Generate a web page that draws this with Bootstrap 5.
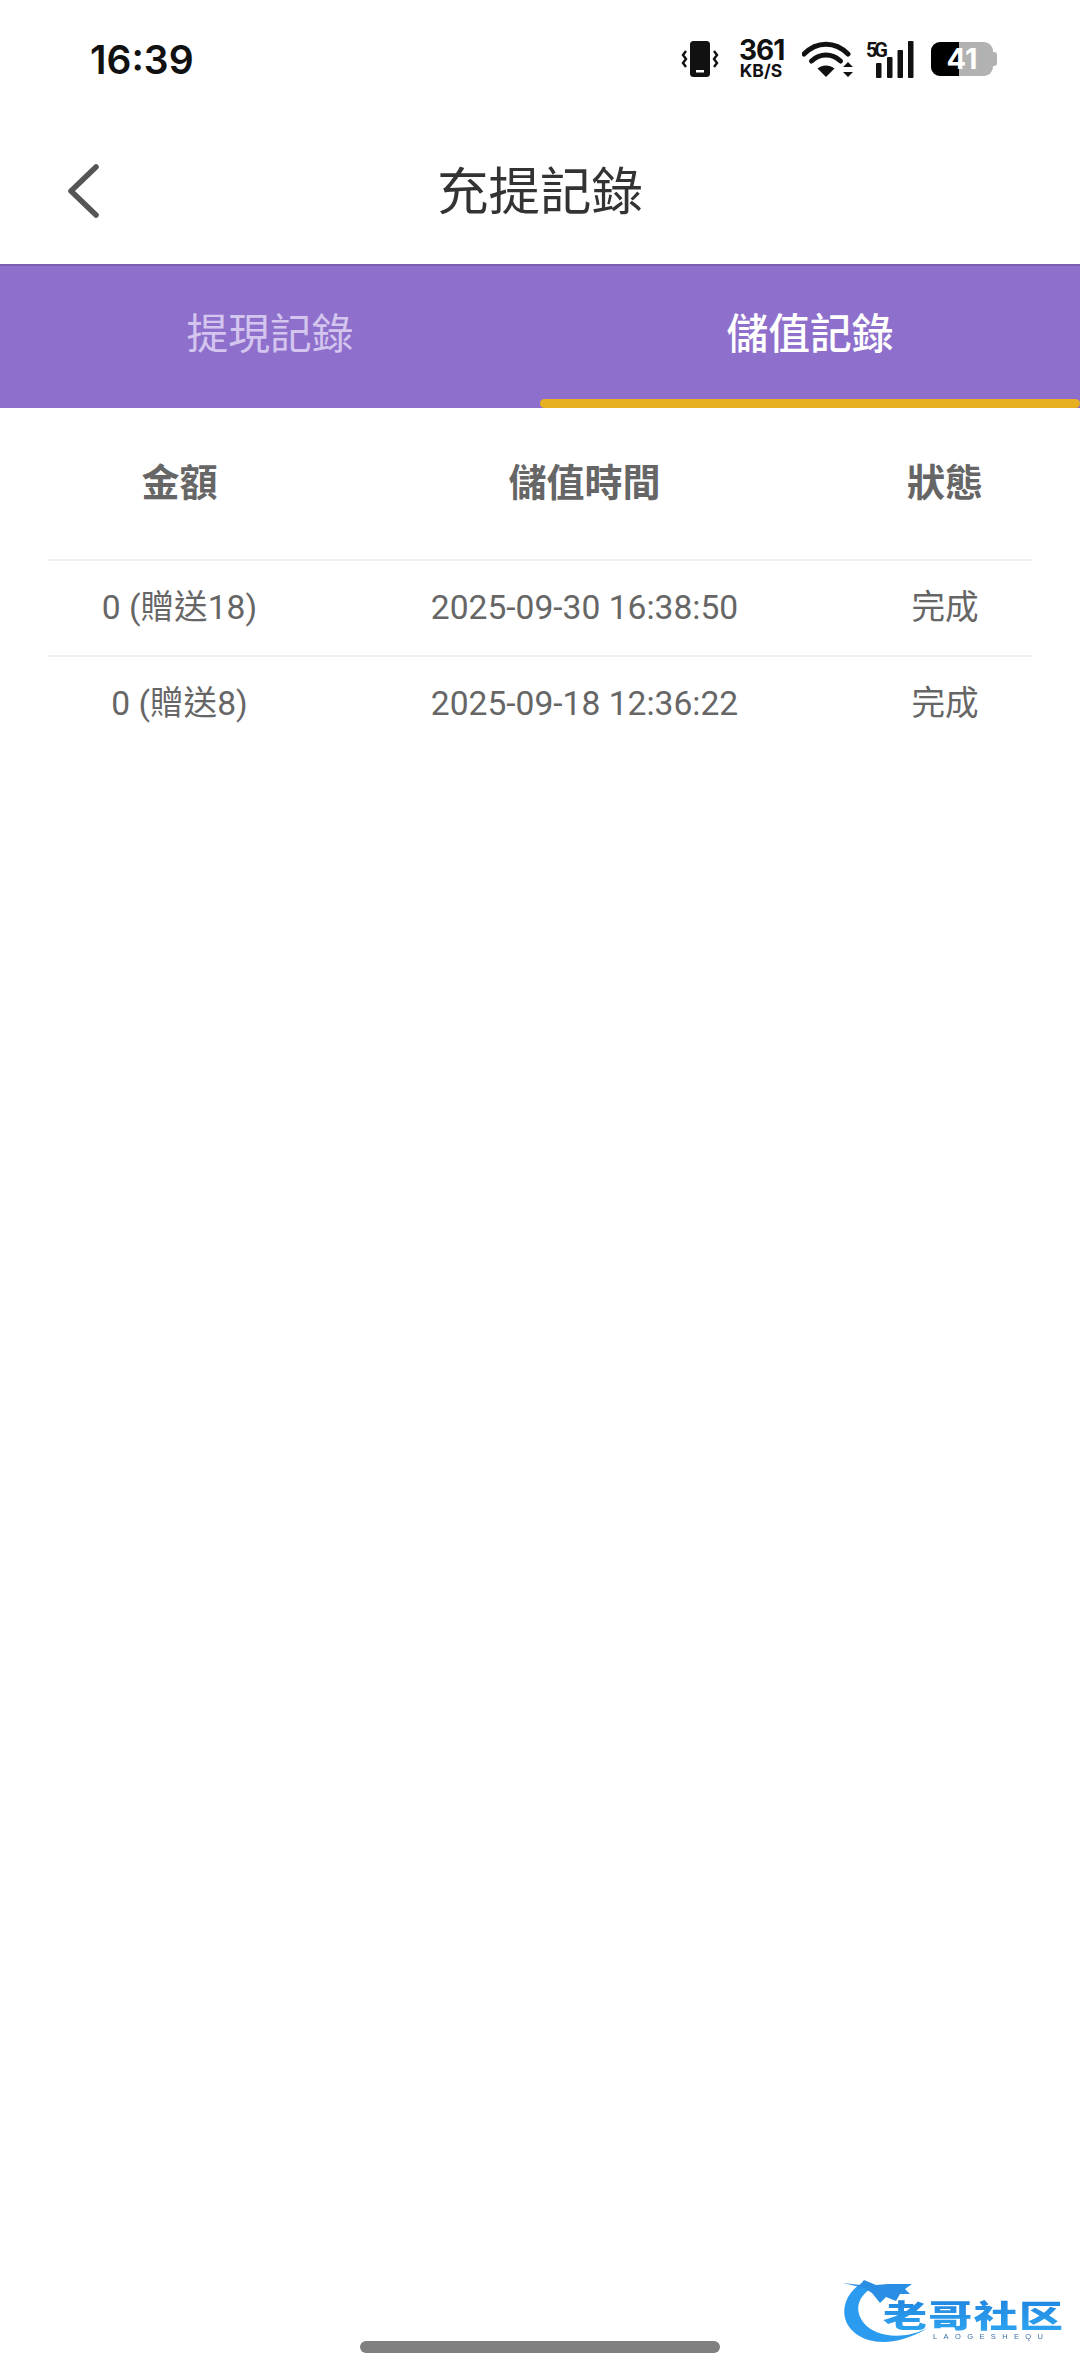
<!DOCTYPE html>
<html lang="zh-Hant">
<head>
    <meta charset="UTF-8">
    <meta name="viewport" content="width=device-width, initial-scale=1">
    <title>充提記錄</title>
    <link href="https://cdn.jsdelivr.net/npm/bootstrap@5.3.0/dist/css/bootstrap.min.css" rel="stylesheet">
    <style>
        body {
            font-family: Roboto, "Noto Sans CJK TC", sans-serif;
            background: #fff;
        }
        .phone-page {
            width: 1080px;
            height: 2374px;
            position: relative;
            overflow: hidden;
        }
        .status-strip {
            height: 110px;
            padding: 8px 83px 0 90px;
            color: #111;
        }
        .clock-text {
            font-family: Inter, sans-serif;
            font-size: 39px;
            font-weight: 600;
            line-height: 1;
        }
        .speed-box {
            width: 44px;
            margin: 0 19px 0 20px;
            font-family: Inter, sans-serif;
            font-weight: 700;
            text-align: center;
        }
        .speed-num { font-size: 28px; line-height: 23px; letter-spacing: -1px; }
        .speed-unit { font-size: 17.500px; line-height: 17px; white-space: nowrap; }
        .signal-icon { margin-left: 12px; }
        .batt-box {
            width: 62px;
            height: 34px;
            margin-left: 15px;
            border-radius: 9px;
            background: #b2b2b2;
            position: relative;
            overflow: hidden;
        }
        .batt-fill { height: 100%; background: #000; }
        .batt-num {
            position: absolute;
            top: 0;
            left: 0;
            right: 0;
            text-align: center;
            color: #fff;
            font-family: Inter, sans-serif;
            font-size: 29px;
            font-weight: 700;
            line-height: 34px;
        }
        .batt-tip { width: 4px; height: 14px; background: #b2b2b2; border-radius: 0 3px 3px 0; }
        .title-bar { height: 154px; padding-top: 8px; }
        .title-side { flex: 1 1 0; padding-left: 66px; }
        .title-text {
            font-size: 51.500px;
            font-weight: 400;
            color: #333;
            margin: 4px 0 0;
            line-height: 1;
        }
        .tab-strip {
            height: 144px;
            background: #8e70cc;
            border-top: 2px solid #7a60ae;
        }
        .tab-strip .nav-item { position: relative; }
        .tab-strip .nav-link {
            height: 142px;
            padding: 0;
            font-size: 41.800px;
            line-height: 138px;
            color: #d3c5ee;
        }
        .tab-strip .nav-link.active { color: #fff; font-weight: 500; }
        .tab-mark {
            position: absolute;
            left: 0;
            right: 0;
            bottom: 0;
            height: 9px;
            border-radius: 5px;
            background: #e6b022;
        }
        .record-wrap { padding: 0 48px; }
        .record-table { table-layout: fixed; color: #666; }
        .record-table > * > * > * {
            padding: 7px 0 0;
            text-align: center;
            vertical-align: middle;
            color: #666;
        }
        .record-table th { height: 152px; font-size: 38px; font-weight: 700; }
        .record-table td {
            height: 96px;
            font-size: 33.600px;
            border-top: 2px solid #eee;
        }
        .col-amount { width: 263px; }
        .col-time { width: 547px; }
        .col-state { width: 174px; }
        .home-pill {
            width: 360px;
            height: 12px;
            margin: 0 auto 21px;
            border-radius: 6px;
            background: #808080;
        }
        .site-logo {
            position: absolute;
            left: 820px;
            top: 2260px;
        }
        .logo-name { font-family: "Noto Sans CJK SC", sans-serif; font-size: 44px; font-weight: 900; }
        .logo-sub { font-family: "Liberation Sans", sans-serif; font-size: 7.500px; }
    </style>
</head>
<body>

<div class="phone-page d-flex flex-column">
    <div class="status-strip d-flex align-items-center justify-content-between">
        <span class="clock-text">16:39</span>
        <div class="d-flex align-items-center">
            <svg width="38" height="38" viewBox="0 0 38 38">
                <rect x="9" y="1" width="20" height="36" rx="3.500" fill="#111"/>
                <rect x="15" y="30" width="8" height="2.500" fill="#fff"/>
                <path d="M5 11l-3 4 3 4-3 4 3 4M33 11l3 4-3 4 3 4-3 4" fill="none" stroke="#111" stroke-width="2.400"/>
            </svg>
            <div class="speed-box">
                <div class="speed-num">361</div>
                <div class="speed-unit">KB/S</div>
            </div>
            <svg width="52" height="38" viewBox="0 0 52 38">
                <path d="M2 14C15 1 33 1 46 14" fill="none" stroke="#111" stroke-width="5" stroke-linecap="round"/>
                <path d="M9.500 21C18 13 30 13 38.500 21" fill="none" stroke="#111" stroke-width="5" stroke-linecap="round"/>
                <path d="M15.500 28.500C20.500 24.500 27.500 24.500 32.500 28.500L24 37Z" fill="#111"/>
                <path d="M46 22l5 5H41ZM46 37l5-5H41Z" fill="#111"/>
            </svg>
            <svg width="50" height="42" viewBox="0 -2 50 42" class="signal-icon">
                <text x="0" y="17" font-family="Roboto, sans-serif" font-size="20" font-weight="700" fill="#111" textLength="22">5G</text>
                <rect x="10" y="23" width="5.500" height="15" rx="1" fill="#111"/>
                <rect x="21" y="17" width="5.500" height="21" rx="1" fill="#111"/>
                <rect x="31.500" y="10" width="5.500" height="28" rx="1" fill="#111"/>
                <rect x="42" y="1" width="5.500" height="37" rx="1" fill="#111"/>
            </svg>
            <div class="batt-box">
                <div class="batt-fill" style="width: 45%"></div>
                <div class="batt-num">41</div>
            </div>
            <div class="batt-tip"></div>
        </div>
    </div>

    <div class="title-bar d-flex align-items-center">
        <div class="title-side">
            <svg width="34" height="54" viewBox="0 0 34 54" class="d-block">
                <path d="M30 3L5 27l25 24" fill="none" stroke="#555" stroke-width="5.500" stroke-linecap="round" stroke-linejoin="round"/>
            </svg>
        </div>
        <h1 class="title-text">充提記錄</h1>
        <div class="title-side"></div>
    </div>

    <ul class="nav nav-fill tab-strip">
        <li class="nav-item"><a class="nav-link" href="#">提現記錄</a></li>
        <li class="nav-item">
            <a class="nav-link active" href="#">儲值記錄</a>
            <span class="tab-mark"></span>
        </li>
    </ul>

    <div class="record-wrap flex-grow-1">
        <table class="table table-borderless mb-0 record-table">
            <thead>
                <tr>
                    <th class="col-amount">金額</th>
                    <th class="col-time">儲值時間</th>
                    <th class="col-state">狀態</th>
                </tr>
            </thead>
            <tbody>
                <tr>
                    <td>0 (贈送18)</td>
                    <td>2025-09-30 16:38:50</td>
                    <td>完成</td>
                </tr>
                <tr>
                    <td>0 (贈送8)</td>
                    <td>2025-09-18 12:36:22</td>
                    <td>完成</td>
                </tr>
            </tbody>
        </table>
    </div>

    <div class="home-pill"></div>

    <svg class="site-logo" width="260" height="114" viewBox="0 0 260 114">
        <defs>
            <linearGradient id="logoBlue" x1="0" y1="0" x2="0" y2="1">
                <stop offset="0" stop-color="#1f7fdc"/>
                <stop offset="1" stop-color="#2fa8f2"/>
            </linearGradient>
            <filter id="logoSoft"><feGaussianBlur stdDeviation="0.400"/></filter>
        </defs>
        <g filter="url(#logoSoft)">
            <path d="M44 22C28 30 22 46 25 58C30 78 62 95 108 68C84 80 55 78 43 62C34 50 38 36 52 28Z" fill="#2b9bee"/>
            <path d="M23 23L40 25L44 20L56 25L68 24L92 24L85 29L90 34L80 34L76 41L66 37L60 43L52 33L44 28Z" fill="#2a8fe4"/>
            <text class="logo-name" transform="translate(63,67) scale(1,.7)" fill="url(#logoBlue)" textLength="180">老哥社区</text>
            <text class="logo-sub" x="113" y="79" fill="#3d6fa8" textLength="110">LAOGESHEQU</text>
        </g>
    </svg>
</div>

</body>
</html>
